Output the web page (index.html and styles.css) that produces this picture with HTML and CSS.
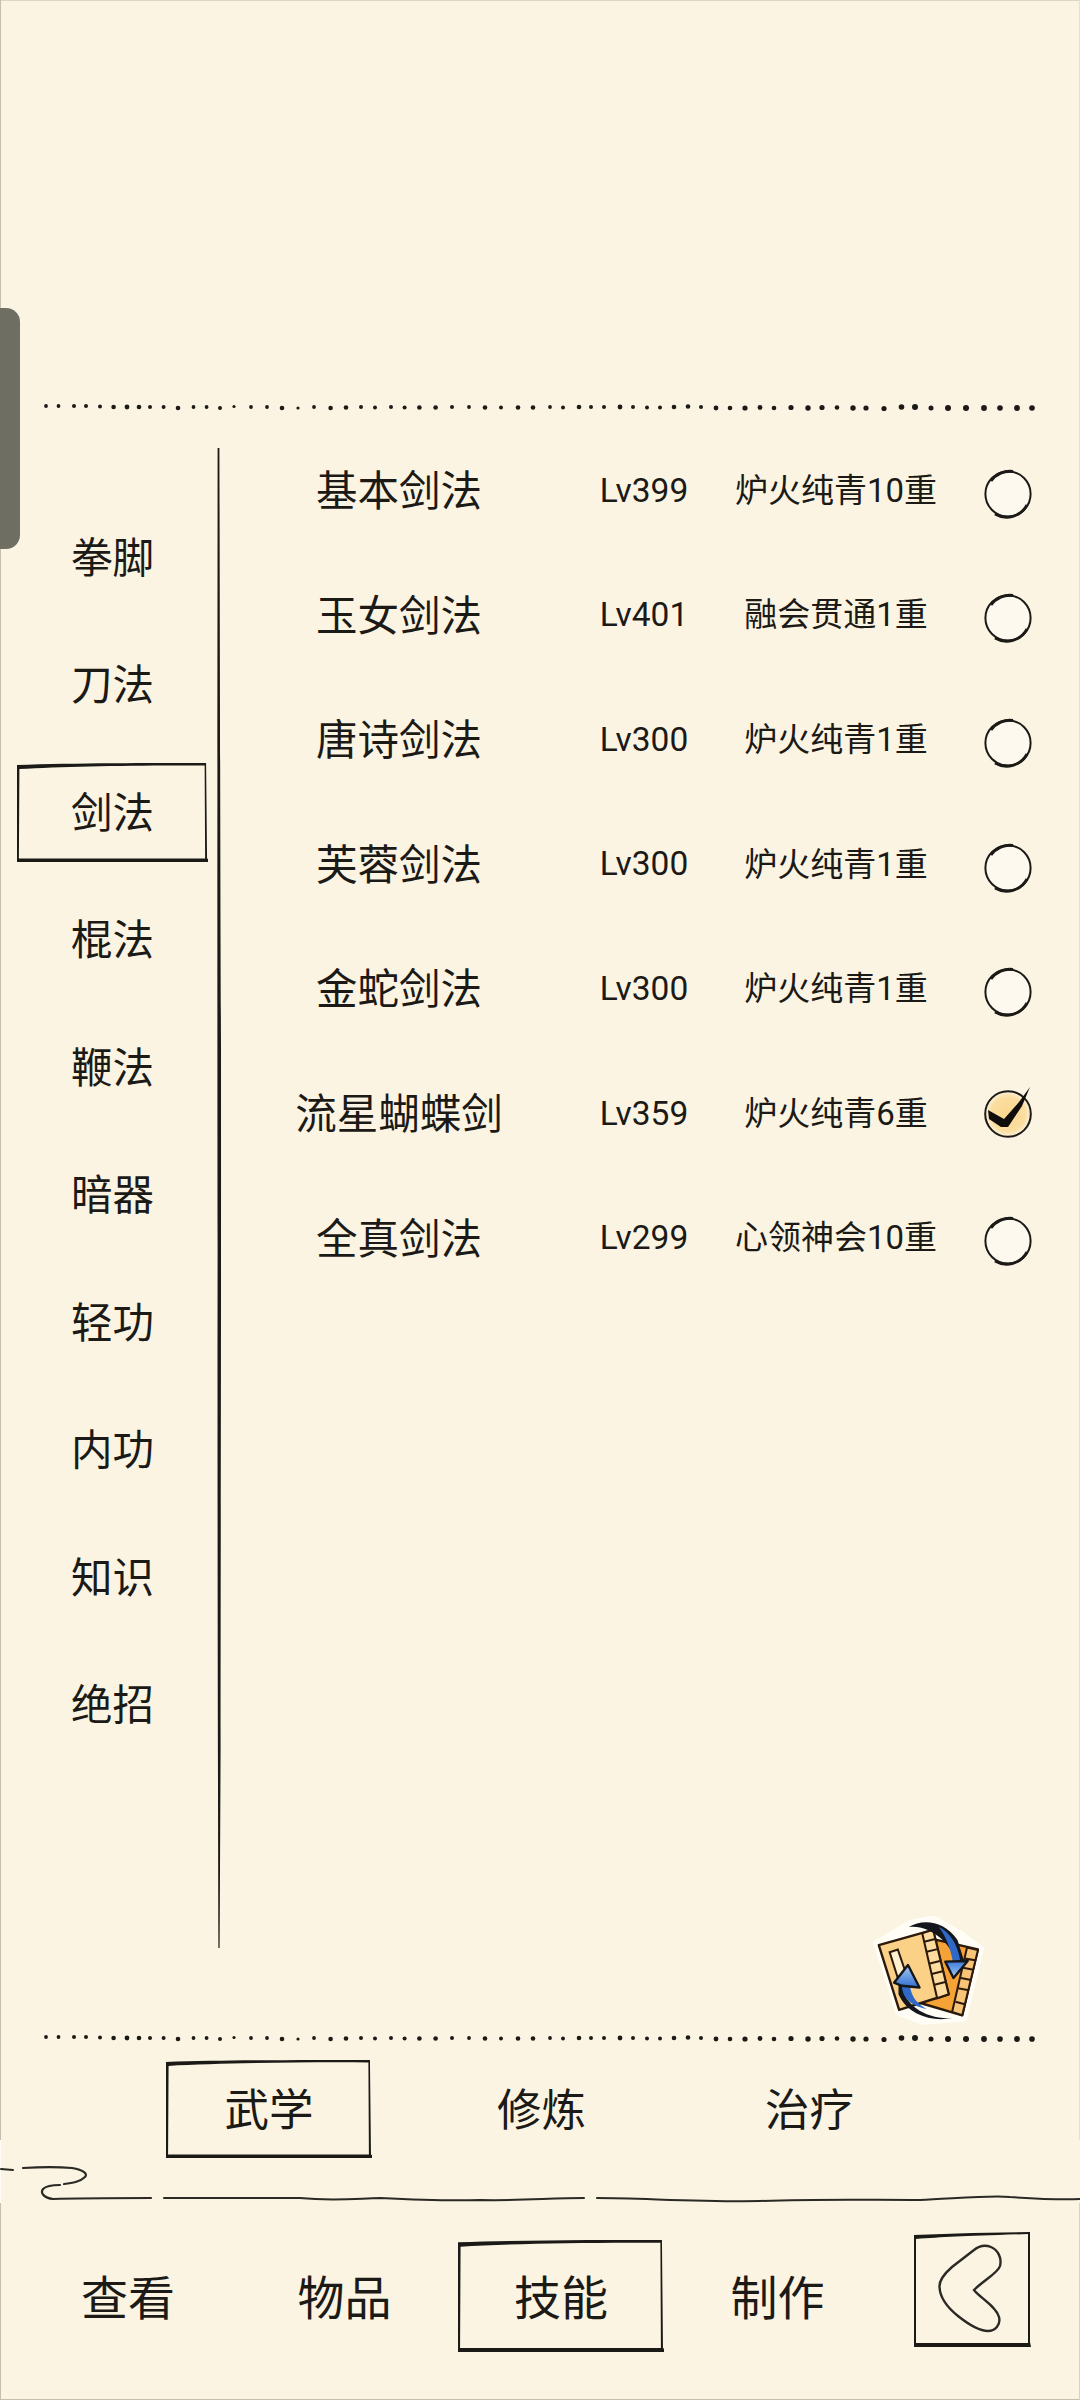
FILE: index.html
```html
<!DOCTYPE html>
<html lang="zh-CN">
<head>
<meta charset="utf-8">
<title>技能</title>
<link rel="stylesheet" href="styles.css">
</head>
<body>
<svg class="defs" width="0" height="0" aria-hidden="true">
  <defs>
    <symbol id="dots" viewBox="0 0 1080 12">
      <g fill="#1b1a16">
        <circle cx="46" cy="5" r="1.9"/><circle cx="58.5" cy="5" r="1.9"/><circle cx="74" cy="5" r="2"/><circle cx="86" cy="5" r="2"/><circle cx="100" cy="5.5" r="2"/><circle cx="113.6" cy="6" r="2.3"/><circle cx="127" cy="6" r="2.4"/><circle cx="139" cy="6" r="2.3"/><circle cx="150" cy="6" r="2"/><circle cx="163.6" cy="6" r="2"/><circle cx="178" cy="7" r="2.3"/><circle cx="193.5" cy="6" r="1.9"/><circle cx="206.6" cy="6" r="1.9"/><circle cx="220" cy="7" r="2"/><circle cx="234" cy="5.5" r="1.6"/><circle cx="251" cy="6" r="1.9"/><circle cx="267" cy="6" r="1.9"/><circle cx="282" cy="7" r="2.3"/><circle cx="298" cy="7" r="1.6"/><circle cx="314" cy="6" r="1.9"/><circle cx="330.6" cy="7" r="2.3"/><circle cx="346" cy="6.5" r="2.3"/><circle cx="361" cy="6" r="2"/><circle cx="375" cy="6.5" r="2"/><circle cx="391" cy="6" r="2"/><circle cx="404.6" cy="6.5" r="2"/><circle cx="419.4" cy="6.5" r="2.3"/><circle cx="435.6" cy="6.5" r="2.3"/><circle cx="452" cy="6" r="2"/><circle cx="469" cy="6" r="1.9"/><circle cx="485" cy="6.5" r="2.3"/><circle cx="501" cy="6.5" r="2"/><circle cx="518" cy="6.5" r="2.3"/><circle cx="533" cy="6.5" r="2.3"/>
        <circle cx="550" cy="6" r="1.9"/><circle cx="563" cy="6.5" r="2"/><circle cx="579" cy="6" r="2.3"/><circle cx="591" cy="6" r="2"/><circle cx="604" cy="6" r="2"/><circle cx="620" cy="6" r="2.4"/><circle cx="633" cy="6" r="2"/><circle cx="647" cy="6.5" r="2"/><circle cx="660" cy="6.5" r="2"/><circle cx="674" cy="6" r="2.3"/><circle cx="688" cy="5.5" r="2.3"/><circle cx="701" cy="6" r="2"/><circle cx="716" cy="7" r="2.4"/><circle cx="730" cy="7" r="2.3"/><circle cx="745" cy="7" r="2.6"/><circle cx="760" cy="6.5" r="2.4"/><circle cx="774" cy="7" r="2.3"/><circle cx="791" cy="6.5" r="2.6"/><circle cx="808" cy="7" r="2.7"/><circle cx="822" cy="6.5" r="2.6"/><circle cx="837" cy="6.5" r="2.3"/><circle cx="853" cy="7" r="2.7"/><circle cx="866" cy="7" r="2.6"/><circle cx="884" cy="7.5" r="2.6"/><circle cx="901.5" cy="6" r="2.8"/><circle cx="915" cy="6" r="3"/><circle cx="931" cy="7" r="2.5"/><circle cx="948" cy="7" r="3"/><circle cx="966" cy="7" r="3"/><circle cx="984" cy="7" r="2.9"/><circle cx="1000" cy="7" r="2.8"/><circle cx="1017" cy="7" r="2.9"/><circle cx="1032" cy="7" r="2.8"/>
      </g>
    </symbol>
    <symbol id="frame" viewBox="0 0 200 100" preserveAspectRatio="none">
      <path fill="#1b1a16" fill-rule="evenodd" d="M0 2C60 0 140 0 198 0L199 96.5 201 97.5 201 100 0 100ZM2.5 6C50 3.5 120 2 196.5 2.5L197 96.5 2 96.5Z"/>
    </symbol>
    <symbol id="radio" viewBox="0 0 50 50">
      <circle cx="25" cy="25" r="22.6" fill="#fdf9ef" stroke="#1b1a16" stroke-width="2"/>
      <path d="M12 45A23 23 0 0 0 44 36M8 12A23 23 0 0 1 30 2.5" fill="none" stroke="#1b1a16" stroke-width="2.8"/>
    </symbol>
  </defs>
</svg>

<main class="page">
  <div class="handle"></div>

  <svg class="dots dots-top"><use href="#dots"/></svg>

  <section class="main">
    <nav class="side">
      <div class="side-item">拳脚</div>
      <div class="side-item">刀法</div>
      <div class="side-item is-active"><svg class="frame" preserveAspectRatio="none"><use href="#frame" width="100%" height="100%"/></svg>剑法</div>
      <div class="side-item">棍法</div>
      <div class="side-item">鞭法</div>
      <div class="side-item">暗器</div>
      <div class="side-item">轻功</div>
      <div class="side-item">内功</div>
      <div class="side-item">知识</div>
      <div class="side-item">绝招</div>
    </nav>

    <svg class="vline" viewBox="0 0 6 1500" preserveAspectRatio="none">
      <path fill="#1b1a16" d="M1.6 0 3.4 0C4.2 300 4.2 400 5 600 5.2 900 4.6 1100 4.6 1300L3.6 1500 2.4 1500C1.6 1200 1.4 1000 1.6 800 1.2 500 1.4 300 1.6 0Z"/>
    </svg>

    <div class="content">
      <div class="skills">
        <div class="skill"><span class="skill-name">基本剑法</span><span class="skill-lv">Lv399</span><span class="skill-rank">炉火纯青10重</span><svg class="radio"><use href="#radio"/></svg></div>
        <div class="skill"><span class="skill-name">玉女剑法</span><span class="skill-lv">Lv401</span><span class="skill-rank">融会贯通1重</span><svg class="radio"><use href="#radio"/></svg></div>
        <div class="skill"><span class="skill-name">唐诗剑法</span><span class="skill-lv">Lv300</span><span class="skill-rank">炉火纯青1重</span><svg class="radio"><use href="#radio"/></svg></div>
        <div class="skill"><span class="skill-name">芙蓉剑法</span><span class="skill-lv">Lv300</span><span class="skill-rank">炉火纯青1重</span><svg class="radio"><use href="#radio"/></svg></div>
        <div class="skill"><span class="skill-name">金蛇剑法</span><span class="skill-lv">Lv300</span><span class="skill-rank">炉火纯青1重</span><svg class="radio"><use href="#radio"/></svg></div>
        <div class="skill"><span class="skill-name">流星蝴蝶剑</span><span class="skill-lv">Lv359</span><span class="skill-rank">炉火纯青6重</span>
          <svg class="radio is-on" viewBox="0 0 50 50">
            <defs>
              <radialGradient id="glow" cx="50%" cy="50%" r="50%">
                <stop offset="0" stop-color="#fbd88f"/><stop offset=".75" stop-color="#fbdd9f"/><stop offset="1" stop-color="#fcf3dc"/>
              </radialGradient>
            </defs>
            <circle cx="25" cy="25" r="22.8" fill="url(#glow)" stroke="#1b1a16" stroke-width="2"/>
            <path fill="#0f0e0c" d="M5 21 21 30 36 13 47 -2 39 17 25 38 18 38 6 30Z"/>
          </svg>
        </div>
        <div class="skill"><span class="skill-name">全真剑法</span><span class="skill-lv">Lv299</span><span class="skill-rank">心领神会10重</span><svg class="radio"><use href="#radio"/></svg></div>
      </div>

      <svg class="swap" viewBox="100 80 330 320">
        <defs>
          <linearGradient id="blueA" x1="0" y1="0" x2="0" y2="1"><stop offset="0" stop-color="#3a78d8"/><stop offset="1" stop-color="#a9cdf5"/></linearGradient>
          <linearGradient id="blueB" x1="0" y1="1" x2="0" y2="0"><stop offset="0" stop-color="#2f6ed0"/><stop offset="1" stop-color="#a9cdf5"/></linearGradient>
        </defs>
        <path fill="#fffdf6" stroke="#fffdf6" stroke-width="16" stroke-linejoin="round" d="M112 160 210 100 280 85 360 130 422 175 372 382 250 392 178 365Z"/>
        <path fill="#f5a237" stroke="#2b1a0c" stroke-width="7" stroke-linejoin="round" d="M290 150 412 178 366 372 240 335Z"/>
        <path fill="#f8c578" stroke="#2b1a0c" stroke-width="6" stroke-linejoin="round" d="M380 172 412 180 366 372 336 362Z"/>
        <path stroke="#2b1a0c" stroke-width="6" fill="none" d="M374 205 405 210M368 232 399 238M362 262 392 268M354 292 385 298M346 332 376 340"/>
        <path fill="#fbd087" stroke="#2b1a0c" stroke-width="7" stroke-linejoin="round" d="M120 165 280 120 326 310 180 356Z"/>
        <path fill="#fddc9f" stroke="#2b1a0c" stroke-width="6" stroke-linejoin="round" d="M248 130 280 120 326 310 292 322Z"/>
        <path stroke="#2b1a0c" stroke-width="6" fill="none" d="M254 155 286 147M261 185 293 177M268 220 300 212M276 250 308 242M284 282 316 274"/>
        <path fill="#fff0cf" stroke="#2b1a0c" stroke-width="6" d="M152 186 176 178 200 248 176 262Z"/>
        <path fill="#14161c" d="M208 112C250 88 310 92 352 150L372 214 345 214C335 160 270 104 208 112Z"/>
        <path fill="#2f68c6" d="M296 112C328 126 352 160 360 212L338 212C330 170 314 132 296 112Z"/>
        <path fill="url(#blueA)" stroke="#14161c" stroke-width="7" stroke-linejoin="round" d="M316 214 382 212 340 262Z"/>
        <path fill="#14161c" d="M190 285C192 340 260 385 335 380 280 392 205 372 178 310L178 285Z"/>
        <path fill="#2f68c6" d="M188 285 212 285C216 320 236 340 262 354 220 345 190 325 188 285Z"/>
        <path fill="url(#blueB)" stroke="#14161c" stroke-width="7" stroke-linejoin="round" d="M165 276 206 224 240 290 188 285Z"/>
      </svg>
    </div>
  </section>

  <svg class="dots dots-bottom"><use href="#dots"/></svg>

  <section class="tabs">
    <div class="tab is-active"><svg class="frame" preserveAspectRatio="none"><use href="#frame" width="100%" height="100%"/></svg>武学</div>
    <div class="tab">修炼</div>
    <div class="tab">治疗</div>
  </section>

  <svg class="divider" viewBox="0 0 1080 40">
    <g fill="none" stroke="#2a2924" stroke-linecap="round">
      <path stroke-width="2" d="M1 4 13 5"/>
      <path stroke-width="2.2" d="M23 3C40 2 60 2 72 3 84 5 88 9 85 12 80 17 72 18 64 19M60 20C52 20 46 21 43 24 40 28 44 33 53 34 80 33 120 33 151 33"/>
      <path stroke-width="2" d="M164 33C210 33 260 33 300 33 330 36 350 34 380 33 420 35 450 36 480 35 520 36 550 33 584 33"/>
      <path stroke-width="2" d="M597 33C640 33 700 37 760 36 820 34 860 35 920 35 950 34 990 30 1010 32 1040 34 1060 35 1080 34"/>
    </g>
  </svg>

  <nav class="bottom-nav">
    <div class="nav-item">查看</div>
    <div class="nav-item">物品</div>
    <div class="nav-item is-active"><svg class="frame" preserveAspectRatio="none"><use href="#frame" width="100%" height="100%"/></svg>技能</div>
    <div class="nav-item">制作</div>
    <div class="back">
      <svg class="back-icon" viewBox="0 0 116 115">
        <path fill="#1b1a16" fill-rule="evenodd" d="M0 3 58 1 116 0 116 110 117 115 0 115ZM2 7C30 5 50 4 114 2L114 111 2 111Z"/>
        <path fill="none" stroke="#2a2924" stroke-width="2.4" d="M25.5 55C25 48 30 42 38 35L60 18C66 13 72 13 77 15 84 18 88 26 86 34 84 41 70 48 60 58 66 66 82 74 85 85 87 93 81 99 74 99 66 99 54 92 44 84 34 76 26 66 25.5 55Z"/>
      </svg>
    </div>
  </nav>
</main>
</body>
</html>
```

FILE: styles.css
```css
* { box-sizing: border-box; }

html, body {
  margin: 0;
  padding: 0;
  background: #fbf4e3;
}

.defs { position: absolute; }

.page {
  position: relative;
  width: 1080px;
  height: 2400px;
  display: flex;
  flex-direction: column;
  overflow: hidden;
  color: #1b1a16;
  font-family: Roboto, "Noto Sans CJK SC", sans-serif;
  background:
    linear-gradient(to bottom, #c4bfae 0 2140px, #fffdf6 2140px 2203px, #c4bfae 2203px) left top / 1px 100% no-repeat,
    linear-gradient(to bottom, #e6e0cf 0 2140px, #fbf4e3 2140px 2203px, #d8d2c1 2203px) right top / 1px 100% no-repeat,
    linear-gradient(#c4bfae, #c4bfae) left bottom / 100% 1px no-repeat,
    linear-gradient(#dcd6c5, #dcd6c5) left top / 100% 1px no-repeat,
    #fbf4e3;
}

.handle {
  position: absolute;
  left: 0;
  top: 308px;
  width: 20px;
  height: 241px;
  background: #6f6e62;
  border-radius: 0 14px 14px 0;
}

.dots {
  display: block;
  flex: none;
  width: 1080px;
  height: 12px;
}

.dots-top { margin-top: 401px; }

.main {
  display: flex;
  flex: none;
  height: 1619px;
}

.side {
  flex: none;
  width: 216px;
  padding-top: 80px;
}

.side-item {
  position: relative;
  width: 191px;
  height: 127.5px;
  margin-left: 17px;
  padding-top: 3px;
  display: flex;
  align-items: center;
  justify-content: center;
  font-size: 41.5px;
  line-height: 1;
}

.frame {
  position: absolute;
  left: 0;
  width: 100%;
  pointer-events: none;
}

.side-item .frame {
  top: 15px;
  height: 99px;
}

.vline {
  flex: none;
  width: 6px;
  height: 1500px;
  margin-top: 35px;
}

.content {
  flex: 1;
  display: flex;
  flex-direction: column;
  min-width: 0;
}

.skills {
  padding-top: 15px;
}

.skill {
  display: grid;
  grid-template-columns: 354px 136px 248px 96px;
  align-items: center;
  justify-items: center;
  height: 124.6px;
}

.skill-name { margin-top: 3px; font-size: 41.5px; line-height: 1; }
.skill-lv { font-size: 33.5px; line-height: 1; }
.skill-rank { font-size: 33px; line-height: 1; }

.radio {
  display: block;
  width: 50px;
  height: 50px;
  margin-top: 7px;
  overflow: visible;
}

.radio.is-on { margin-top: 2px; }

.swap {
  display: block;
  flex: none;
  width: 112px;
  height: 109px;
  margin-top: auto;
  margin-bottom: 7px;
  margin-left: 650px;
}

.tabs {
  display: grid;
  flex: none;
  grid-template-columns: 272.5px 268px 205px;
  padding: 16px 0 0 166px;
}

.tab {
  position: relative;
  width: 206px;
  height: 98px;
  padding-top: 4px;
  display: flex;
  align-items: center;
  justify-content: center;
  font-size: 44.5px;
  line-height: 1;
}

.tab .frame {
  top: 0;
  height: 100%;
}

.divider {
  display: block;
  flex: none;
  width: 1080px;
  height: 40px;
  margin-top: 7px;
}

.bottom-nav {
  display: grid;
  flex: 1;
  grid-template-columns: repeat(4, 216.5px) 116px;
  align-items: start;
  padding: 27px 0 0 19.75px;
}

.nav-item {
  position: relative;
  width: 206px;
  height: 112px;
  margin: 8px auto 0;
  padding-top: 4px;
  display: flex;
  align-items: center;
  justify-content: center;
  font-size: 47px;
  line-height: 1;
}

.nav-item .frame {
  top: 0;
  height: 100%;
}

.back {
  width: 116px;
  height: 115px;
  margin-left: 28.25px;
}

.back-icon {
  display: block;
  width: 116px;
  height: 115px;
  overflow: visible;
}
```
